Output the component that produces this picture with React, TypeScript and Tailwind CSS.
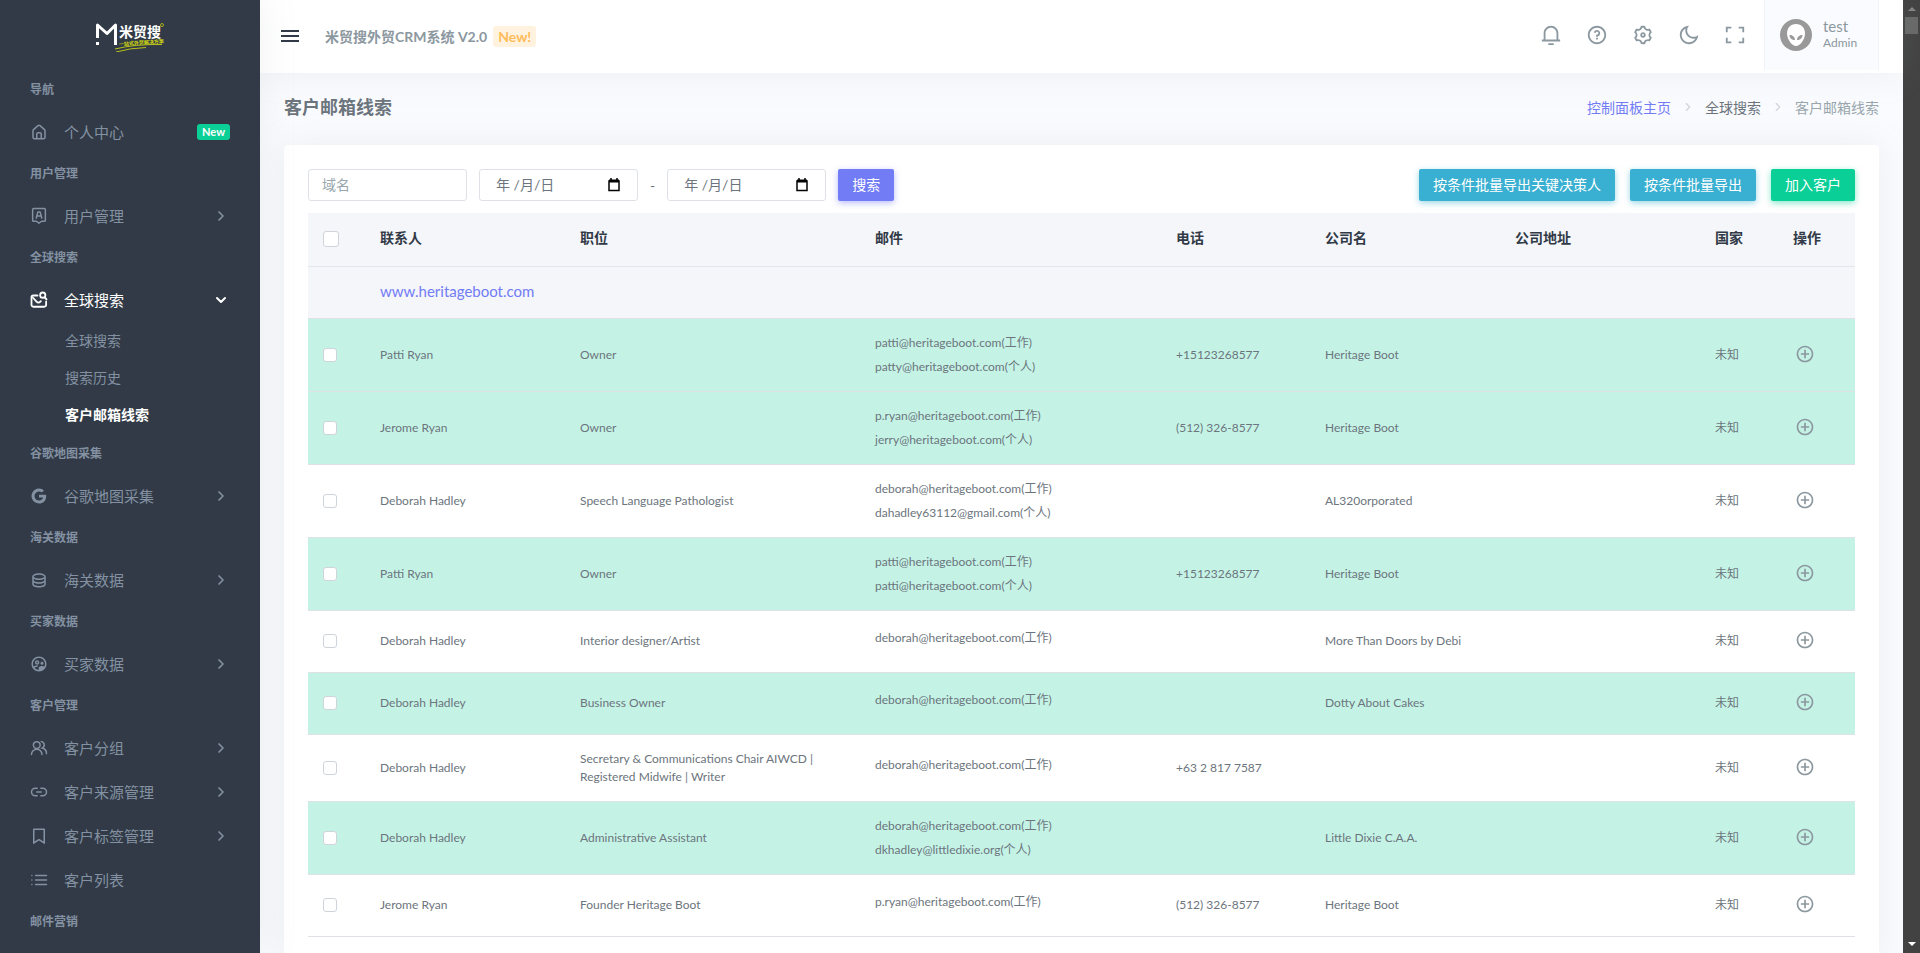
// src/App.tsx
import type { ReactNode } from "react";
import {
  RiAddCircleLine,
  RiBookmarkLine,
  RiDatabase2Line,
  RiFullscreenLine,
  RiGoogleFill,
  RiMoonLine,
  RiNotification3Line,
  RiQuestionLine,
  RiSettings3Line,
} from "react-icons/ri";
import { MdOutlineSupervisedUserCircle } from "react-icons/md";
import { ChevronDown, ChevronRight } from "lucide-react";

type NavItem = {
  label: string;
  icon: ReactNode;
  badge?: string;
  arrow?: boolean;
  children?: string[];
};

type NavGroup = { title: string; items: NavItem[] };

type Lead = {
  name: string;
  role: string;
  emails: string[];
  phone?: string;
  company?: string;
  viewed?: boolean;
};

function HomeIcon() {
  return (
    <svg viewBox="0 0 24 24" className="size-[18px]" fill="currentColor">
      <path d="M20,8h0L14,2.74a3,3,0,0,0-4,0L4,8a3,3,0,0,0-1,2.26V19a3,3,0,0,0,3,3H18a3,3,0,0,0,3-3V10.25A3,3,0,0,0,20,8ZM14,20H10V15a1,1,0,0,1,1-1h2a1,1,0,0,1,1,1Zm5-1a1,1,0,0,1-1,1H16V15a3,3,0,0,0-3-3H11a3,3,0,0,0-3,3v5H6a1,1,0,0,1-1-1V10.25a1,1,0,0,1,.34-.75l6-5.25a1,1,0,0,1,1.32,0l6,5.25a1,1,0,0,1,.34.75Z" />
    </svg>
  );
}

function AccountIcon() {
  return (
    <svg viewBox="0 0 24 24" className="size-[18px]" fill="none" stroke="currentColor" strokeWidth="2" strokeLinejoin="round">
      <path d="M5 2h14a1.500 1.500 0 0 1 1.500 1.500v14a1.500 1.500 0 0 1-1.500 1.500h-3.500L12 21.500l-3.500-2.500H5A1.500 1.500 0 0 1 3.500 17.500V3.500A1.500 1.500 0 0 1 5 2Z" />
      <path d="M8.500 15.500V14l2-7.500h3l2 7.500v1.500M9.500 12h5" />
    </svg>
  );
}

function MailSearchIcon() {
  return (
    <svg viewBox="0 0 24 24" className="size-[18px]" fill="none" stroke="currentColor" strokeWidth="2.400" strokeLinecap="round" strokeLinejoin="round">
      <path d="M10 6H4.500A2.500 2.500 0 0 0 2 8.500v10A2.500 2.500 0 0 0 4.500 21H19a2.500 2.500 0 0 0 2.500-2.500V14" />
      <path d="M4 9l5 5.500a3 3 0 0 0 4.500 0l1-1" />
      <circle cx="17" cy="5.500" r="3.500" />
      <path d="M19.500 8.500L22 11" />
    </svg>
  );
}

function UsersIcon() {
  return (
    <svg viewBox="0 0 24 24" className="size-[18px]" fill="none" stroke="currentColor" strokeWidth="2" strokeLinecap="round">
      <circle cx="9" cy="8" r="4.500" />
      <path d="M2 20.500a7 7 0 0 1 14 0M15 3.500a4.500 4.500 0 0 1 1.500 8.500 7.500 7.500 0 0 1 5.500 7.500" />
    </svg>
  );
}

function LinkIcon() {
  return (
    <svg viewBox="0 0 24 24" className="size-[18px]" fill="none" stroke="currentColor" strokeWidth="2" strokeLinecap="round">
      <path d="M9.500 17H7A5 5 0 0 1 7 7h2.500M14.500 7H17a5 5 0 0 1 0 10h-2.500M9 12h6" />
    </svg>
  );
}

function ListIcon() {
  return (
    <svg viewBox="0 0 24 24" className="size-[18px]" fill="none" stroke="currentColor" strokeWidth="2" strokeLinecap="round">
      <path d="M7.500 6H22M7.500 12H22M7.500 18H22M2.500 6h.01M2.500 12h.01M2.500 18h.01" />
    </svg>
  );
}

const NAV: NavGroup[] = [
  { title: "导航", items: [{ label: "个人中心", icon: <HomeIcon />, badge: "New" }] },
  { title: "用户管理", items: [{ label: "用户管理", icon: <AccountIcon />, arrow: true }] },
  {
    title: "全球搜索",
    items: [
      {
        label: "全球搜索",
        icon: <MailSearchIcon />,
        arrow: true,
        children: ["全球搜索", "搜索历史", "客户邮箱线索"],
      },
    ],
  },
  { title: "谷歌地图采集", items: [{ label: "谷歌地图采集", icon: <RiGoogleFill size={18} />, arrow: true }] },
  { title: "海关数据", items: [{ label: "海关数据", icon: <RiDatabase2Line size={18} />, arrow: true }] },
  { title: "买家数据", items: [{ label: "买家数据", icon: <MdOutlineSupervisedUserCircle size={18} />, arrow: true }] },
  {
    title: "客户管理",
    items: [
      { label: "客户分组", icon: <UsersIcon />, arrow: true },
      { label: "客户来源管理", icon: <LinkIcon />, arrow: true },
      { label: "客户标签管理", icon: <RiBookmarkLine size={18} />, arrow: true },
      { label: "客户列表", icon: <ListIcon /> },
    ],
  },
  { title: "邮件营销", items: [] },
];

const LEADS: Lead[] = [
  {
    name: "Patti Ryan",
    role: "Owner",
    emails: ["patti@heritageboot.com(工作)", "patty@heritageboot.com(个人)"],
    phone: "+15123268577",
    company: "Heritage Boot",
    viewed: true,
  },
  {
    name: "Jerome Ryan",
    role: "Owner",
    emails: ["p.ryan@heritageboot.com(工作)", "jerry@heritageboot.com(个人)"],
    phone: "(512) 326-8577",
    company: "Heritage Boot",
    viewed: true,
  },
  {
    name: "Deborah Hadley",
    role: "Speech Language Pathologist",
    emails: ["deborah@heritageboot.com(工作)", "dahadley63112@gmail.com(个人)"],
    company: "AL320orporated",
  },
  {
    name: "Patti Ryan",
    role: "Owner",
    emails: ["patti@heritageboot.com(工作)", "patti@heritageboot.com(个人)"],
    phone: "+15123268577",
    company: "Heritage Boot",
    viewed: true,
  },
  {
    name: "Deborah Hadley",
    role: "Interior designer/Artist",
    emails: ["deborah@heritageboot.com(工作)"],
    company: "More Than Doors by Debi",
  },
  {
    name: "Deborah Hadley",
    role: "Business Owner",
    emails: ["deborah@heritageboot.com(工作)"],
    company: "Dotty About Cakes",
    viewed: true,
  },
  {
    name: "Deborah Hadley",
    role: "Secretary & Communications Chair AIWCD | Registered Midwife | Writer",
    emails: ["deborah@heritageboot.com(工作)"],
    phone: "+63 2 817 7587",
  },
  {
    name: "Deborah Hadley",
    role: "Administrative Assistant",
    emails: ["deborah@heritageboot.com(工作)", "dkhadley@littledixie.org(个人)"],
    company: "Little Dixie C.A.A.",
    viewed: true,
  },
  {
    name: "Jerome Ryan",
    role: "Founder Heritage Boot",
    emails: ["p.ryan@heritageboot.com(工作)"],
    phone: "(512) 326-8577",
    company: "Heritage Boot",
  },
];

function Logo() {
  return (
    <svg viewBox="0 0 70 34" className="h-[34px] w-[70px]" role="img" aria-label="米贸搜">
      <path d="M2.500 20V7L12 15.500 20.500 7v20" fill="none" stroke="#fff" strokeWidth="3" strokeLinejoin="round" />
      <rect x="1" y="24" width="3" height="3" fill="#fff" />
      <text x="24" y="19" fill="#fff" fontSize="14" fontWeight="700">米贸搜</text>
      <circle cx="67" cy="7" r="1.500" fill="none" stroke="#a3ab1c" strokeWidth="1" />
      <text x="24" y="28" fill="#d5dc12" fontSize="5" fontWeight="700" transform="rotate(-4 24 28)">一站式外贸解决方案</text>
      <path d="M20 31q20-5 47-4.500M21 34q14-4 30-4.500" fill="none" stroke="#c9d014" strokeWidth="0.900" />
    </svg>
  );
}

function Sidebar() {
  return (
    <aside className="relative z-20 w-[260px] shrink-0 overflow-hidden bg-[#313a46] text-[#8391a2] shadow-[0_0_35px_0_rgba(154,161,171,0.15)]">
      <a href="#" className="flex h-[70px] items-center justify-center">
        <Logo />
      </a>
      <nav>
        {NAV.map((group) => (
          <div key={group.title}>
            <h2 className="flex h-10 items-center px-[30px] text-[12px] font-bold">{group.title}</h2>
            {group.items.map((item) => (
              <div key={item.label}>
                <a
                  href="#"
                  className={`flex h-11 items-center px-[30px] text-[15px] ${item.children ? "text-white" : ""}`}
                >
                  <span className="mr-4 flex w-[18px] justify-center">{item.icon}</span>
                  <span>{item.label}</span>
                  {item.badge && (
                    <span className="ml-auto rounded-[3px] bg-[#0acf97] px-[5px] text-[11px] leading-4 font-bold text-white">
                      {item.badge}
                    </span>
                  )}
                  {item.arrow &&
                    (item.children ? (
                      <ChevronDown className="mr-px ml-auto size-4" strokeWidth={3} />
                    ) : (
                      <ChevronRight className="mr-px ml-auto size-4" strokeWidth={2.5} />
                    ))}
                </a>
                {item.children && (
                  <ul className="pb-px">
                    {item.children.map((child) => (
                      <li key={child}>
                        <a
                          href="#"
                          className={`flex h-[37px] items-center pl-[65px] text-[14px] ${
                            child === "客户邮箱线索" ? "font-bold text-white" : ""
                          }`}
                        >
                          {child}
                        </a>
                      </li>
                    ))}
                  </ul>
                )}
              </div>
            ))}
          </div>
        ))}
      </nav>
    </aside>
  );
}

function Avatar() {
  return (
    <svg viewBox="0 0 32 32" className="size-8">
      <circle cx="16" cy="16" r="16" fill="#999" />
      <path d="M16 5c5.500 0 9 4 9 9.500 0 5.500-4.500 12.500-9 12.500S7 20 7 14.500C7 9 10.500 5 16 5Z" fill="#fff" />
      <path d="M9.500 16c3 0 5.500 2 5.500 5-3 0-5.500-2-5.500-5ZM22.500 16c-3 0-5.500 2-5.500 5 3 0 5.500-2 5.500-5Z" fill="#999" />
    </svg>
  );
}

function Topbar() {
  const actions = [
    { label: "通知", icon: <RiNotification3Line size={22} /> },
    { label: "帮助", icon: <RiQuestionLine size={22} /> },
    { label: "设置", icon: <RiSettings3Line size={22} /> },
    { label: "深色模式", icon: <RiMoonLine size={22} /> },
    { label: "全屏", icon: <RiFullscreenLine size={22} /> },
  ];

  return (
    <header className="relative z-10 flex h-[73px] shrink-0 items-start bg-white pr-6 pl-[21px] text-[#8c989f] shadow-[0_0_35px_0_rgba(154,161,171,0.15)]">
      <div className="flex h-[72px] items-center">
        <button type="button" aria-label="菜单" className="flex w-[18px] flex-col gap-[3px]">
          <span className="h-0.5 bg-[#313a46]" />
          <span className="h-0.5 bg-[#313a46]" />
          <span className="h-0.5 bg-[#313a46]" />
        </button>
        <span className="ml-[26px] text-[14px] font-bold">米贸搜外贸CRM系统 V2.0</span>
        <span className="ml-1.5 rounded-[3px] bg-[#fff3e0] px-[5px] text-[14px] leading-[21px] font-bold text-[#ffbc5a]">
          New!
        </span>
      </div>
      <div className="ml-auto flex h-[70px] items-center">
        <div className="mr-[18px] flex gap-6">
          {actions.map((action) => (
            <button key={action.label} type="button" aria-label={action.label}>
              {action.icon}
            </button>
          ))}
        </div>
        <button
          type="button"
          className="flex h-[70px] w-[115px] items-center gap-[11px] border-x border-[#f1f3fa] bg-[#fafbfe] pl-[15px] text-left"
        >
          <Avatar />
          <span className="flex flex-col pb-0.5">
            <span className="text-[15px] leading-[18px]">test</span>
            <span className="text-[12px] leading-4">Admin</span>
          </span>
        </button>
      </div>
    </header>
  );
}

function DateInput({ label }: { label: string }) {
  return (
    <div className="flex h-8 w-[159px] items-center rounded-[3px] border border-[#dee2e6] pr-[17px] pl-4">
      <input
        type="text"
        aria-label={label}
        placeholder="年 /月/日"
        className="w-full min-w-0 pb-0.5 text-[14px] outline-none placeholder:text-[#6c757d]"
      />
      <svg viewBox="0 0 12 14" className="h-3.5 w-3 shrink-0" fill="none">
        <path d="M3 0v2M9 0v2" stroke="#000" strokeWidth="1.500" />
        <path d="M1 3h10v9.500H1Z" stroke="#000" strokeWidth="1.500" />
        <path d="M1 3h10" stroke="#000" strokeWidth="3" />
      </svg>
    </div>
  );
}

function Toolbar() {
  return (
    <div className="flex items-center justify-between text-[14px]">
      <form className="flex items-center gap-3">
        <input
          type="text"
          aria-label="域名"
          placeholder="域名"
          className="h-8 w-[159px] rounded-[3px] border border-[#dee2e6] px-[13px] pb-0.5 outline-none placeholder:text-[#98a6ad]"
        />
        <DateInput label="开始日期" />
        <span>-</span>
        <DateInput label="结束日期" />
        <button
          type="button"
          className="h-8 rounded-[2px] bg-[#727cf5] px-3.5 pb-0.5 text-white shadow-[0_2px_6px_0_rgba(114,124,245,0.5)]"
        >
          搜索
        </button>
      </form>
      <div className="flex gap-[15px] text-white">
        <button type="button" className="h-8 rounded-[2px] bg-[#39afd1] px-3.5 pb-0.5 shadow-[0_2px_6px_0_rgba(57,175,209,0.5)]">
          按条件批量导出关键决策人
        </button>
        <button type="button" className="h-8 rounded-[2px] bg-[#39afd1] px-3.5 pb-0.5 shadow-[0_2px_6px_0_rgba(57,175,209,0.5)]">
          按条件批量导出
        </button>
        <button type="button" className="h-8 rounded-[2px] bg-[#0acf97] px-3.5 pb-0.5 shadow-[0_2px_6px_0_rgba(10,207,151,0.5)]">
          加入客户
        </button>
      </div>
    </div>
  );
}

function LeadsTable() {
  return (
    <table className="mt-3 w-full table-fixed text-left text-[12px] leading-[18px]">
      <colgroup>
        <col className="w-[57px]" />
        <col className="w-[200px]" />
        <col className="w-[295px]" />
        <col className="w-[301px]" />
        <col className="w-[149px]" />
        <col className="w-[190px]" />
        <col className="w-[200px]" />
        <col className="w-[78px]" />
        <col className="w-[77px]" />
      </colgroup>
      <thead>
        <tr className="h-[53px] border-b border-[#e3e6ec] bg-[#f5f6fa] text-[14px] text-[#313a46]">
          <th className="px-[15px]">
            <input
              type="checkbox"
              aria-label="全选"
              className="block size-4 appearance-none rounded-[3px] border border-[#ced4da] bg-white"
            />
          </th>
          {["联系人", "职位", "邮件", "电话", "公司名", "公司地址", "国家", "操作"].map((title) => (
            <th key={title} className="px-[15px] pb-0.5 font-bold">
              {title}
            </th>
          ))}
        </tr>
      </thead>
      <tbody>
        <tr className="h-[52px] border-b border-[#dee2e6] bg-[#f5f6fa]">
          <td />
          <td colSpan={8} className="px-[15px] pb-0.5 text-[15px]">
            <a href="#" className="text-[#727cf5]">www.heritageboot.com</a>
          </td>
        </tr>
        {LEADS.map((lead, i) => (
          <tr key={i} className={`h-[62px] border-b border-[#dee2e6] ${lead.viewed ? "bg-[#c4f3e6]" : ""}`}>
            <td className="px-[15px]">
              <input
                type="checkbox"
                aria-label={lead.name}
                className="block size-3.5 appearance-none rounded-[3px] border border-[#ced4da] bg-white"
              />
            </td>
            <td className="px-[15px]">{lead.name}</td>
            <td className="px-[15px] py-[15px]">{lead.role}</td>
            <td className="px-[15px] py-[15px]">
              <div className="flex flex-col gap-1.5">
                {lead.emails.map((email) => (
                  <p key={email} className="only:mb-1.5">{email}</p>
                ))}
              </div>
            </td>
            <td className="px-[15px]">{lead.phone}</td>
            <td className="px-[15px]">{lead.company}</td>
            <td />
            <td className="px-[15px]">未知</td>
            <td className="px-[17px] pb-0.5">
              <button type="button" aria-label="添加" className="block text-[#8c989f]">
                <RiAddCircleLine size={20} />
              </button>
            </td>
          </tr>
        ))}
      </tbody>
    </table>
  );
}

function Scrollbar() {
  return (
    <div className="flex w-[17px] shrink-0 flex-col items-center justify-between bg-[#424242] py-[7px]">
      <div className="flex flex-col items-center gap-1.5">
        <span className="border-x-4 border-b-4 border-x-transparent border-b-[#858585]" />
        <span className="h-[17px] w-[13px] bg-[#686868]" />
      </div>
      <span className="border-x-4 border-t-4 border-x-transparent border-t-white" />
    </div>
  );
}

export default function App() {
  return (
    <div className="flex h-screen overflow-hidden bg-[#fafbfe] font-['Lato','Noto_Sans_CJK_SC',sans-serif] text-[14px] text-[#6c757d]">
      <Sidebar />
      <div className="flex min-w-0 flex-1 flex-col">
        <Topbar />
        <main className="flex min-h-0 flex-1 flex-col px-6">
          <div className="flex h-[72px] shrink-0 items-center justify-between pb-1">
            <h1 className="text-[18px] font-bold">客户邮箱线索</h1>
            <ol className="flex items-center">
              <li>
                <a href="#" className="text-[#727cf5]">控制面板主页</a>
              </li>
              <ChevronRight className="mx-2.5 size-3.5 text-[#ced4da]" />
              <li>
                <a href="#">全球搜索</a>
              </li>
              <ChevronRight className="mx-2.5 size-3.5 text-[#ced4da]" />
              <li className="text-[#98a6ad]">客户邮箱线索</li>
            </ol>
          </div>
          <section className="flex-1 rounded-t-[4px] bg-white p-6 shadow-[0_0_35px_0_rgba(154,161,171,0.15)]">
            <Toolbar />
            <LeadsTable />
          </section>
        </main>
      </div>
      <Scrollbar />
    </div>
  );
}
